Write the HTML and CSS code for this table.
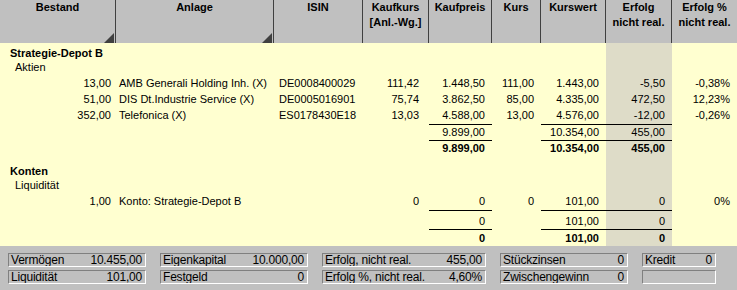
FILE: index.html
```html
<!DOCTYPE html>
<html lang="de">
<head>
<meta charset="utf-8">
<title>Depot</title>
<link rel="stylesheet" href="styles.css">
</head>
<body>
<div class="app">
  <div class="head">
    <div class="hc hc-sort">Bestand<span class="tri"></span></div>
    <div class="hc hc-sort">Anlage<span class="tri"></span></div>
    <div class="hc">ISIN</div>
    <div class="hc">Kaufkurs<br>[Anl.-Wg.]</div>
    <div class="hc">Kaufpreis</div>
    <div class="hc">Kurs</div>
    <div class="hc">Kurswert</div>
    <div class="hc">Erfolg<br>nicht real.</div>
    <div class="hc hc-last">Erfolg %<br>nicht real.</div>
  </div>

  <div class="body">
    <div class="row h14 first"><span class="grp">Strategie-Depot B</span></div>
    <div class="row"><span class="sub">Aktien</span></div>

    <div class="row">
      <span class="c c1">13,00</span><span class="c c2">AMB Generali Holding Inh. (X)</span><span class="c c3">DE0008400029</span>
      <span class="c c4">111,42</span><span class="c c5">1.448,50</span><span class="c c6">111,00</span>
      <span class="c c7">1.443,00</span><span class="c c8">-5,50</span><span class="c c9">-0,38%</span>
    </div>
    <div class="row">
      <span class="c c1">51,00</span><span class="c c2">DIS Dt.Industrie Service (X)</span><span class="c c3">DE0005016901</span>
      <span class="c c4">75,74</span><span class="c c5">3.862,50</span><span class="c c6">85,00</span>
      <span class="c c7">4.335,00</span><span class="c c8">472,50</span><span class="c c9">12,23%</span>
    </div>
    <div class="row">
      <span class="c c1">352,00</span><span class="c c2">Telefonica (X)</span><span class="c c3">ES0178430E18</span>
      <span class="c c4">13,03</span><span class="c c5">4.588,00</span><span class="c c6">13,00</span>
      <span class="c c7">4.576,00</span><span class="c c8">-12,00</span><span class="c c9">-0,26%</span>
    </div>
    <div class="row">
      <span class="c c1"></span><span class="c c2"></span><span class="c c3"></span><span class="c c4"></span>
      <span class="c c5 ln">9.899,00</span><span class="c c6"></span>
      <span class="c c7 ln">10.354,00</span><span class="c c8 ln">455,00</span><span class="c c9"></span>
    </div>
    <div class="row bold">
      <span class="c c1"></span><span class="c c2"></span><span class="c c3"></span><span class="c c4"></span>
      <span class="c c5 ln">9.899,00</span><span class="c c6"></span>
      <span class="c c7 ln">10.354,00</span><span class="c c8 ln">455,00</span><span class="c c9"></span>
    </div>

    <div class="row h14 gap"><span class="grp">Konten</span></div>
    <div class="row"><span class="sub">Liquidität</span></div>
    <div class="row">
      <span class="c c1">1,00</span><span class="c c2">Konto: Strategie-Depot B</span><span class="c c3"></span>
      <span class="c c4">0</span><span class="c c5">0</span><span class="c c6">0</span>
      <span class="c c7">101,00</span><span class="c c8">0</span><span class="c c9">0%</span>
    </div>
    <div class="row h19">
      <span class="c c1"></span><span class="c c2"></span><span class="c c3"></span><span class="c c4"></span>
      <span class="c c5 ln">0</span><span class="c c6"></span>
      <span class="c c7 ln">101,00</span><span class="c c8 ln">0</span><span class="c c9"></span>
    </div>
    <div class="row h17 bold">
      <span class="c c1"></span><span class="c c2"></span><span class="c c3"></span><span class="c c4"></span>
      <span class="c c5 ln">0</span><span class="c c6"></span>
      <span class="c c7 ln">101,00</span><span class="c c8 ln">0</span><span class="c c9"></span>
    </div>
  </div>

  <div class="foot">
    <div class="fb"><span>Vermögen</span><span>10.455,00</span></div>
    <div class="fb"><span>Eigenkapital</span><span>10.000,00</span></div>
    <div class="fb"><span>Erfolg, nicht real.</span><span>455,00</span></div>
    <div class="fb"><span>Stückzinsen</span><span>0</span></div>
    <div class="fb"><span>Kredit</span><span>0</span></div>
    <div class="fb"><span>Liquidität</span><span>101,00</span></div>
    <div class="fb"><span>Festgeld</span><span>0</span></div>
    <div class="fb"><span>Erfolg %, nicht real.</span><span>4,60%</span></div>
    <div class="fb"><span>Zwischengewinn</span><span>0</span></div>
    <div class="fb"><span></span><span></span></div>
  </div>
</div>
</body>
</html>
```

FILE: styles.css
```css
* { box-sizing: border-box; }

html, body {
  margin: 0;
  padding: 0;
  background: #c0c0c0;
}

.app {
  width: 737px;
  height: 290px;
  display: flex;
  flex-direction: column;
  font-family: "Liberation Sans", Arial, sans-serif;
  font-size: 11px;
  color: #000;
  overflow: hidden;
}

/* ---------- header ---------- */
.head {
  height: 43px;
  flex: none;
  display: grid;
  grid-template-columns: 116px 158px 89px 66px 63px 49px 65px 66px 65px;
  background: #c0c0c0;
}

.hc {
  display: flex;
  flex-direction: column;
  align-items: center;
  text-align: center;
  font-weight: bold;
  line-height: 15px;
  padding-top: 0;
  border-right: 1px solid #404040;
}

.hc-last { border-right: none; }

.tri {
  margin-top: auto;
  align-self: flex-end;
  margin-right: 1px;
  width: 0;
  height: 0;
  border-left: 10px solid transparent;
  border-bottom: 10px solid #404040;
}

/* ---------- body ---------- */
.body {
  flex: 1;
  padding-top: 3px;
  background: linear-gradient(to right,
    #ffffd0 0, #ffffd0 606px,
    #dedcc8 606px, #dedcc8 672px,
    #ffffd0 672px, #ffffd0 100%);
}

.row {
  display: grid;
  grid-template-columns: 116px 158px 89px 66px 63px 49px 65px 66px 65px;
  height: 16px;
  line-height: 15px;
}

.row.h14 { height: 14px; line-height: 14px; }
.row.h17 { height: 17px; line-height: 17px; }
.row.h19 { height: 19px; line-height: 20px; }
.row.gap { margin-top: 8px; }

.bold { font-weight: bold; }

.grp {
  grid-column: 1 / -1;
  font-weight: bold;
  padding-left: 10px;
}

.sub {
  grid-column: 1 / -1;
  padding-left: 15px;
}

.c { white-space: nowrap; overflow: hidden; }

.c1 { text-align: right; padding-right: 5px; }
.c2 { text-align: left; padding-left: 3px; }
.c3 { text-align: left; padding-left: 5px; }
.c4 { text-align: right; padding-right: 10px; }
.c5 { text-align: right; padding-right: 7px; }
.c6 { text-align: right; padding-right: 7px; }
.c7 { text-align: right; padding-right: 7px; }
.c8 { text-align: right; padding-right: 7px; }
.c9 { text-align: right; padding-right: 7px; }

.ln { border-top: 1px solid #000; }

/* ---------- footer ---------- */
.foot {
  height: 44px;
  flex: none;
  background: #c0c0c0;
  display: grid;
  grid-template-columns: 138px 148px 164px 128px 74px;
  grid-auto-rows: 14px;
  column-gap: 14px;
  row-gap: 3px;
  padding: 7px 0 0 8px;
}

.fb {
  display: flex;
  justify-content: space-between;
  align-items: center;
  border: 1px solid;
  border-color: #808080 #ffffff #ffffff #808080;
  padding: 0 3px 0 2px;
  font-family: "Liberation Sans", Arial, sans-serif;
  font-size: 12px;
  letter-spacing: -0.2px;
  line-height: 12px;
  white-space: nowrap;
  overflow: hidden;
}
```
